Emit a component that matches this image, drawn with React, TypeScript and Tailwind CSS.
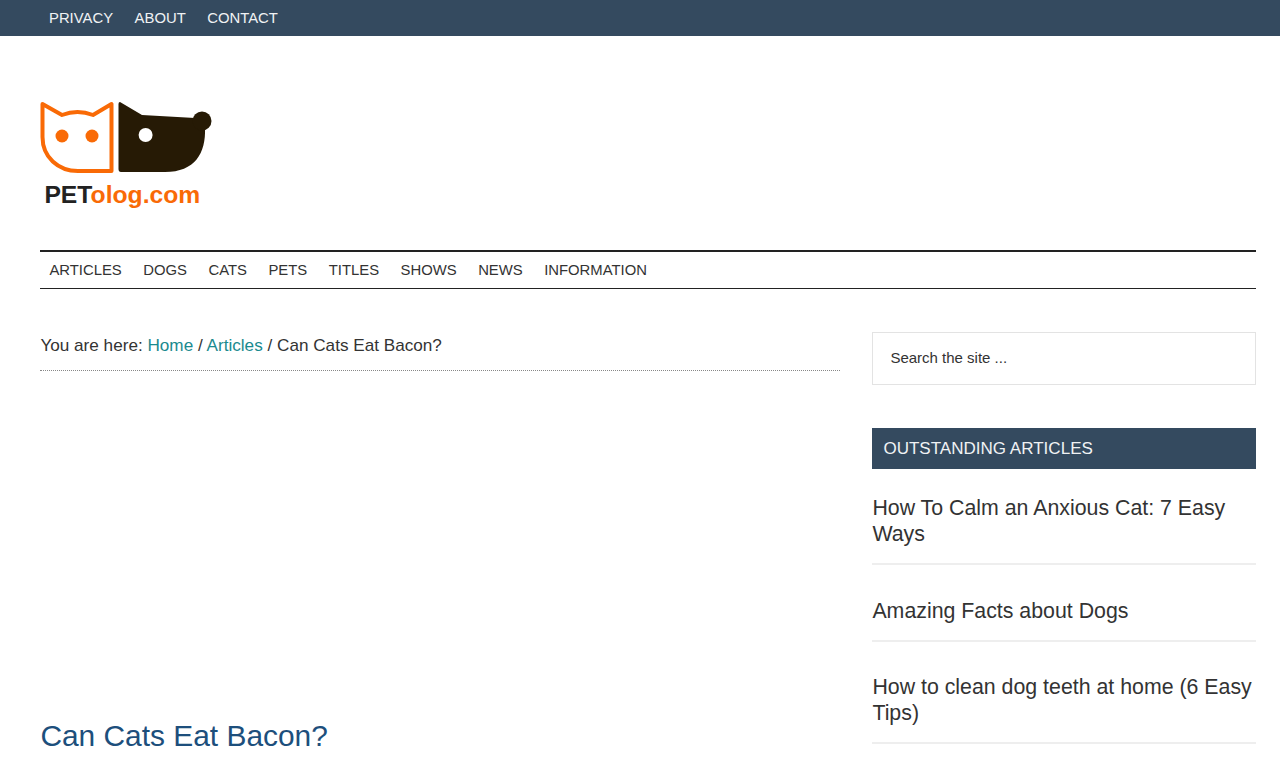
import React from "react";

const topLinks = ["PRIVACY", "ABOUT", "CONTACT"];
const mainLinks = ["ARTICLES", "DOGS", "CATS", "PETS", "TITLES", "SHOWS", "NEWS", "INFORMATION"];
const articles = [
  "How To Calm an Anxious Cat: 7 Easy Ways",
  "Amazing Facts about Dogs",
  "How to clean dog teeth at home (6 Easy Tips)",
];

const Logo = () => (
  <div className="w-[172px]">
    <svg width="172" height="74" viewBox="0 0 172 74" className="block">
      <path
        d="M2.5 3 L22 14 Q37.5 8 53 14 L71.5 3 L71.5 70 L38 70 C18 70 2.5 56 2.5 36 Z"
        fill="#fff"
        stroke="#f96a06"
        strokeWidth="4"
        strokeLinejoin="round"
      />
      <circle cx="22" cy="35" r="6.5" fill="#f96a06" />
      <circle cx="52" cy="35" r="6.5" fill="#f96a06" />
      <path
        d="M80 1 L102 14 L155 17 L165 27 C166 52 155 71 125 71 L81 71 Q78.5 71 78.5 68 L78.5 3 Q78.5 1 80 1 Z"
        fill="#261a05"
      />
      <circle cx="162" cy="20" r="9.5" fill="#261a05" />
      <circle cx="105.6" cy="34" r="7" fill="#fff" />
    </svg>
    <div className="mt-[6px] ml-[4px] text-[24.7px] leading-[28px] font-bold text-[#222]">
      PET<span className="text-[#f96a06]">olog.com</span>
    </div>
  </div>
);

export default function App() {
  return (
    <div className="h-[768px] overflow-hidden bg-white font-['Liberation_Sans',sans-serif] text-[#333]">
      <div className="h-[36px] bg-[#344a5f] pl-[40px]">
        <ul className="flex h-full items-center">
          {topLinks.map((link) => (
            <li key={link} className="mr-[3.5px] px-[9px] text-[14.85px] text-[#f0f2f4]">
              {link}
            </li>
          ))}
        </ul>
      </div>

      <div className="ml-[40.4px] w-[1216px]">
        <div className="h-[214px] pt-[65px]">
          <Logo />
        </div>

        <ul className="flex h-[39px] items-center border-t-2 border-b border-[#222]">
          {mainLinks.map((link) => (
            <li key={link} className="mr-[3.5px] px-[9px] text-[14.85px] text-[#333]">
              {link}
            </li>
          ))}
        </ul>

        <div className="mt-[43px] flex justify-between">
          <main className="w-[800px]">
            <div className="h-[39px] border-b border-dotted border-[#888] text-[17.15px] leading-[26px]">
              You are here: <a className="text-[#1a8a8f]">Home</a> / <a className="text-[#1a8a8f]">Articles</a> / Can Cats Eat Bacon?
            </div>
            <h1 className="mt-[344px] text-[29.9px] leading-[42px] text-[#1d4f7c]">Can Cats Eat Bacon?</h1>
          </main>

          <aside className="w-[384px]">
            <div className="flex h-[53px] items-center border border-[#e3e3e3] px-[17px] text-[15px] text-[#333]">
              Search the site ...
            </div>
            <h4 className="mt-[43px] flex h-[41px] items-center bg-[#344a5f] px-[11px] text-[17.05px] text-[#f0f2f4]">
              OUTSTANDING ARTICLES
            </h4>
            <ul className="mt-[26px]">
              {articles.map((title) => (
                <li key={title} className="mb-[32.5px] border-b-2 border-[#eeeeee] pb-[16px] text-[21.33px] leading-[26px] text-[#333]">
                  {title}
                </li>
              ))}
            </ul>
          </aside>
        </div>
      </div>
    </div>
  );
}
